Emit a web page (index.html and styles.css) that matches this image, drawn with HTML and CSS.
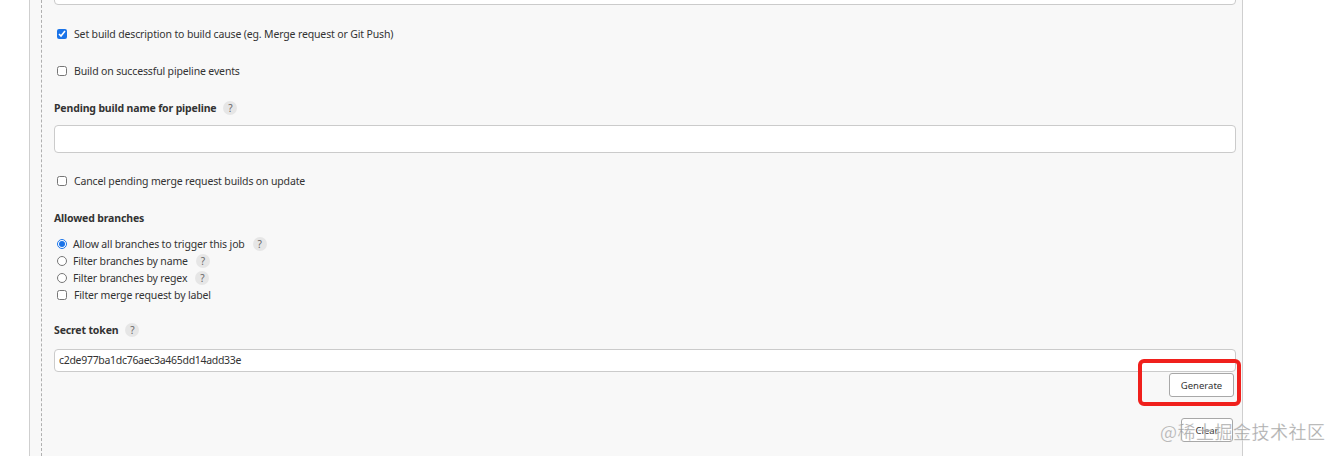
FILE: index.html
```html
<!DOCTYPE html>
<html lang="en">
<head>
    <meta charset="UTF-8">
    <meta name="viewport" content="width=device-width, initial-scale=1.0">
    <title>GitLab trigger</title>
    <link rel="stylesheet" href="styles.css">
</head>
<body>
    <div class="panel">
        <div class="section">
            <div class="text-input top-input"></div>

            <label class="check-row row-first">
                <input type="checkbox" checked> Set build description to build cause (eg. Merge request or Git Push)
            </label>
            <label class="check-row">
                <input type="checkbox"> Build on successful pipeline events
            </label>

            <div class="field-label">Pending build name for pipeline <span class="help">?</span></div>
            <div class="text-input tall-input"></div>

            <label class="check-row row-after-input">
                <input type="checkbox"> Cancel pending merge request builds on update
            </label>

            <div class="field-label">Allowed branches</div>
            <div class="branch-list">
                <label class="radio-row"><input type="radio" name="branches" checked> Allow all branches to trigger this job <span class="help">?</span></label>
                <label class="radio-row"><input type="radio" name="branches"> Filter branches by name <span class="help">?</span></label>
                <label class="radio-row"><input type="radio" name="branches"> Filter branches by regex <span class="help">?</span></label>
                <label class="radio-row box"><input type="checkbox"> Filter merge request by label</label>
            </div>

            <div class="field-label">Secret token <span class="help">?</span></div>
            <div class="text-input token-input">c2de977ba1dc76aec3a465dd14add33e</div>

            <div class="button-row">
                <div class="marked">
                    <button class="btn generate">Generate</button>
                    <div class="highlight"></div>
                </div>
            </div>
            <div class="button-row clear-row">
                <button class="btn clear">Clear</button>
            </div>
        </div>
    </div>
    <div class="watermark">@稀土掘金技术社区</div>
</body>
</html>
```

FILE: styles.css
```css
body {
    margin: 0;
    background-color: #fff;
    font-family: "Noto Sans", "Open Sans", sans-serif;
    font-size: 10.5px;
    letter-spacing: -0.15px;
    color: #333;
    overflow: hidden;
}

.panel {
    margin-left: 29px;
    width: 1201px;
    height: 456px;
    border-left: 1px solid #cfcfcf;
    border-right: 1px solid #cfcfcf;
    background-color: #f8f8f8;
    padding-left: 11px;
}

.section {
    height: 456px;
    border-left: 1px dashed #b0b0b0;
    padding-left: 12px;
    padding-right: 6px;
    display: flex;
    flex-direction: column;
}

.text-input {
    background-color: #fff;
    border: 1px solid #cbcbcb;
    border-radius: 4px;
    box-sizing: border-box;
}

.top-input {
    height: 28px;
    margin-top: -23px;
    flex-shrink: 0;
}

.tall-input {
    height: 28px;
    margin-top: 7px;
    flex-shrink: 0;
}

.token-input {
    height: 23px;
    margin-top: 9px;
    padding-left: 4px;
    line-height: 21px;
    letter-spacing: -0.3px;
    flex-shrink: 0;
}

.check-row {
    display: flex;
    align-items: center;
    height: 20px;
    margin-top: 17px;
    padding-left: 3px;
}

.row-first {
    margin-top: 19px;
}

.row-after-input {
    margin-top: 18px;
}

.check-row input,
.radio-row input {
    width: 10px;
    height: 10px;
    margin: 0 7px 0 0;
    accent-color: #1a73e8;
}

.field-label {
    display: flex;
    align-items: center;
    height: 20px;
    margin-top: 17px;
    font-weight: bold;
}

.help {
    display: inline-flex;
    align-items: center;
    justify-content: center;
    width: 14px;
    height: 14px;
    margin-left: 7px;
    border-radius: 50%;
    background-color: #e6e6e6;
    color: #666;
    font-size: 10px;
    font-weight: normal;
    letter-spacing: 0;
}

.branch-list {
    margin-top: 7px;
}

.radio-row {
    display: flex;
    align-items: center;
    height: 17px;
    padding-left: 3px;
}

.radio-row input[type="radio"] {
    margin-right: 6px;
}

.radio-row .help {
    margin-left: 8px;
}

.button-row {
    display: flex;
    justify-content: flex-end;
    padding-right: 2px;
    margin-top: 1px;
}

.clear-row {
    margin-top: 21px;
    padding-right: 3px;
}

.marked {
    position: relative;
}

.btn {
    height: 24px;
    border: 1px solid #a8a8a8;
    border-radius: 3px;
    background-color: #fff;
    font-family: "Noto Sans", "Open Sans", sans-serif;
    font-size: 9.5px;
    color: #333;
    padding: 0;
}

.generate {
    width: 65px;
}

.clear {
    width: 52px;
}

.highlight {
    position: absolute;
    left: -31px;
    top: -14px;
    width: 103px;
    height: 47px;
    border: 4px solid #f0201c;
    border-radius: 6px;
    box-sizing: border-box;
}

.watermark {
    position: absolute;
    left: 1160px;
    top: 418px;
    white-space: nowrap;
    font-family: "Noto Sans CJK SC", sans-serif;
    font-size: 18px;
    letter-spacing: 0.5px;
    color: rgba(150, 150, 150, 0.8);
    -webkit-text-stroke: 0.4px rgba(255, 255, 255, 0.6);
}
```
